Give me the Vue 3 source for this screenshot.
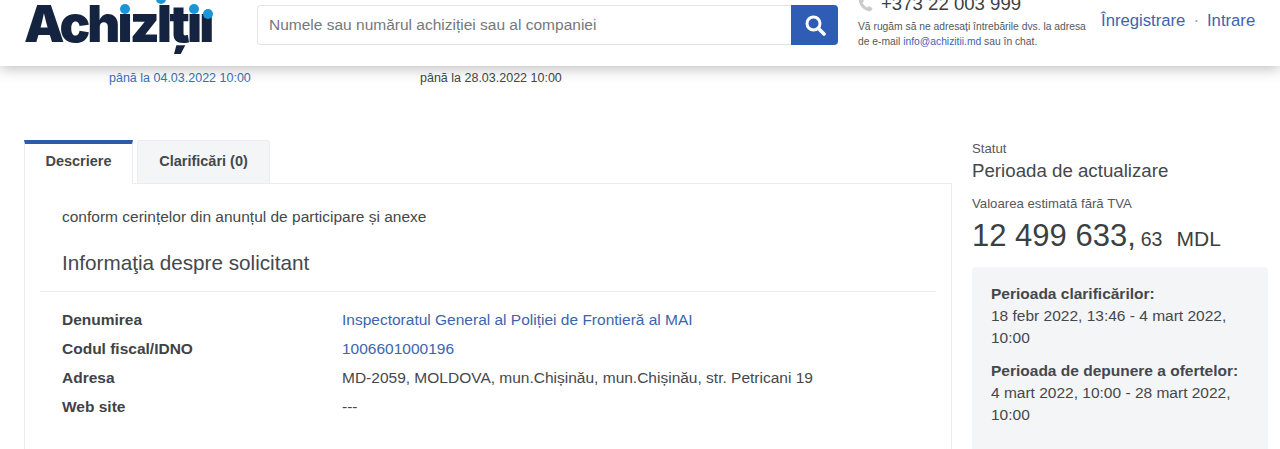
<template>
  <div class="page">
    <header class="topbar">
      <div class="logo">
        <span class="logo-text">AchızIțıı</span>
        <i class="dot dot-1"></i>
        <i class="dot dot-2"></i>
        <i class="dot dot-3"></i>
        <i class="dot dot-4"></i>
      </div>
      <form class="search" @submit.prevent>
        <input class="search-input" type="text" placeholder="Numele sau numărul achiziției sau al companiei" />
        <button class="search-btn" aria-label="Caută">
          <svg width="22" height="22" viewBox="0 0 22 22" fill="none">
            <circle cx="9.5" cy="9.5" r="6.5" stroke="#fff" stroke-width="3" />
            <path d="M14.5 14.5L20 20" stroke="#fff" stroke-width="3.6" stroke-linecap="round" />
          </svg>
        </button>
      </form>
      <div class="contact">
        <div class="phone">
          <svg width="15" height="15" viewBox="0 0 16 16">
            <path d="M4 0.5L1.8 1.6C0.8 2.2 0.6 3.4 1 5C2.2 9.8 6.2 13.8 11 15C12.6 15.4 13.8 15.2 14.4 14.2L15.5 12L11.6 9.6L9.8 11.2C8 10.4 5.6 8 4.8 6.2L6.4 4.4Z" fill="#c9cccf" />
          </svg>
          <span>+373 22 003 999</span>
        </div>
        <p class="contact-note">
          Vă rugăm să ne adresați întrebările dvs. la adresa<br />
          de e-mail <a href="#">info@achizitii.md</a> sau în chat.
        </p>
      </div>
      <nav class="auth">
        <a href="#">Înregistrare</a>
        <span class="sep">·</span>
        <a href="#">Intrare</a>
      </nav>
    </header>

    <div class="deadlines">
      <span class="deadline-a">până la 04.03.2022 10:00</span>
      <span class="deadline-b">până la 28.03.2022 10:00</span>
    </div>

    <main class="content">
      <section class="left">
        <div class="tabs">
          <div class="tab active">Descriere</div>
          <div class="tab">Clarificări (0)</div>
        </div>
        <div class="panel">
          <p class="lead">conform cerințelor din anunțul de participare și anexe</p>
          <h2 class="title">Informaţia despre solicitant</h2>
          <dl class="info">
            <template v-for="row in rows" :key="row.label">
              <dt>{{ row.label }}</dt>
              <dd :class="{ link: row.link }">{{ row.value }}</dd>
            </template>
          </dl>
        </div>
      </section>

      <aside class="side">
        <div class="side-label">Statut</div>
        <div class="status">Perioada de actualizare</div>
        <div class="side-label value-label">Valoarea estimată fără TVA</div>
        <div class="amount">
          <span class="amount-main">12 499 633,</span>
          <span class="amount-cents">63</span>
          <span class="amount-cur">MDL</span>
        </div>
        <div class="periods">
          <div v-for="p in periods" :key="p.title" class="period">
            <strong>{{ p.title }}</strong>
            <div>{{ p.text }}</div>
          </div>
        </div>
      </aside>
    </main>
  </div>
</template>

<script setup>
const rows = [
  { label: 'Denumirea', value: 'Inspectoratul General al Poliției de Frontieră al MAI', link: true },
  { label: 'Codul fiscal/IDNO', value: '1006601000196', link: true },
  { label: 'Adresa', value: 'MD-2059, MOLDOVA, mun.Chișinău, mun.Chișinău, str. Petricani 19' },
  { label: 'Web site', value: '---' }
];

const periods = [
  { title: 'Perioada clarificărilor:', text: '18 febr 2022, 13:46 - 4 mart 2022, 10:00' },
  { title: 'Perioada de depunere a ofertelor:', text: '4 mart 2022, 10:00 - 28 mart 2022, 10:00' }
];
</script>

<style>
html, body {
  background: #fff;
  overflow: hidden;
}
</style>

<style scoped>
.page {
  height: 449px;
  overflow: hidden;
  font-family: "Liberation Sans", Arial, sans-serif;
  color: #3f4347;
  background: #fff;
}
.topbar {
  position: relative;
  display: flex;
  align-items: flex-start;
  height: 66px;
  background: #fff;
  box-shadow: 0 2px 14px rgba(0, 0, 0, 0.28);
}
.logo {
  position: relative;
  width: 257px;
  height: 66px;
  flex-shrink: 0;
}
.logo-text {
  position: absolute;
  left: 24px;
  top: -5px;
  font-family: Inter, "Liberation Sans", sans-serif;
  font-weight: 900;
  font-size: 51px;
  line-height: 58px;
  letter-spacing: -2.9px;
  color: #14233f;
  white-space: nowrap;
}
.dot {
  position: absolute;
  width: 10px;
  height: 10px;
  border-radius: 50%;
  background: #1a96d8;
}
.dot-1 { left: 120px; top: 4px; }
.dot-2 { left: 156px; top: -6px; }
.dot-3 { left: 189px; top: 4px; }
.dot-4 { left: 203px; top: 9px; }
.search {
  display: flex;
  width: 581px;
  height: 40px;
  margin-top: 5px;
  flex-shrink: 0;
}
.search-input {
  flex: 1;
  min-width: 0;
  box-sizing: border-box;
  height: 40px;
  padding: 0 11px;
  border: 1px solid #e3e4e6;
  border-right: 0;
  border-radius: 4px 0 0 4px;
  font: 15.5px "Liberation Sans", Arial, sans-serif;
  color: #555;
  outline: none;
}
.search-input::placeholder {
  color: #74787c;
  opacity: 1;
}
.search-btn {
  display: flex;
  align-items: center;
  justify-content: center;
  width: 47px;
  height: 40px;
  padding: 0;
  border: 0;
  border-radius: 0 4px 4px 0;
  background: #2f5db5;
}
.contact {
  width: 243px;
  margin-left: 20px;
  flex-shrink: 0;
}
.phone {
  display: flex;
  align-items: center;
  gap: 8px;
  height: 18px;
  margin-top: -5px;
  font-size: 18.6px;
  line-height: 18px;
  color: #3c3f42;
}
.contact-note {
  margin: 6px 0 0;
  font-size: 10.3px;
  line-height: 15px;
  color: #55585c;
  white-space: nowrap;
}
.contact-note a {
  color: #3c63b4;
  text-decoration: none;
}
.auth {
  display: flex;
  align-items: center;
  height: 18px;
  margin-top: 12px;
  font-size: 16.7px;
  white-space: nowrap;
}
.auth a {
  color: #3d64ad;
  text-decoration: none;
}
.sep {
  margin: 0 8px;
  color: #8a97b0;
}
.deadlines {
  display: flex;
  height: 24px;
  padding: 4px 0 0 109px;
  font-size: 12.5px;
  line-height: 16px;
}
.deadline-a {
  width: 311px;
  color: #3b71b6;
}
.deadline-b {
  color: #43464a;
}
.content {
  display: flex;
  padding: 46px 12px 0 24px;
}
.left {
  width: 928px;
  flex-shrink: 0;
}
.tabs {
  display: flex;
  gap: 4px;
  height: 43px;
  position: relative;
  z-index: 1;
}
.tab {
  box-sizing: border-box;
  width: 133px;
  height: 43px;
  border: 1px solid #ececee;
  border-bottom: 0;
  border-radius: 3px 3px 0 0;
  background: #f4f5f7;
  font-size: 14.5px;
  font-weight: 700;
  line-height: 40px;
  text-align: center;
  color: #44484c;
}
.tab.active {
  width: 109px;
  height: 44px;
  border-top: 4px solid #2f5aa8;
  border-radius: 0;
  background: #fff;
  line-height: 34px;
}
.panel {
  box-sizing: border-box;
  height: 300px;
  padding: 23px 15px 0;
  border: 1px solid #ececee;
}
.lead {
  margin: 0 0 0 22px;
  font-size: 15.5px;
  line-height: 20px;
  color: #44484c;
}
.title {
  margin: 22px 0 0;
  padding: 0 0 14px 22px;
  border-bottom: 1px solid #ececee;
  font-size: 20.7px;
  font-weight: 400;
  line-height: 28px;
  color: #44484c;
}
.info {
  display: grid;
  grid-template-columns: 280px 1fr;
  grid-auto-rows: 29px;
  margin: 13px 0 0 22px;
  font-size: 15.5px;
  line-height: 29px;
}
.info dt {
  font-weight: 700;
  color: #3f4347;
}
.info dd {
  margin: 0;
  color: #44484c;
}
.info dd.link {
  color: #3d64ad;
}
.side {
  width: 296px;
  margin-left: 20px;
  padding-top: 1px;
  flex-shrink: 0;
}
.side-label {
  font-size: 13.2px;
  line-height: 16px;
  color: #55585c;
}
.status {
  margin-top: 2px;
  font-size: 18.7px;
  line-height: 24px;
  color: #44484c;
}
.value-label {
  margin-top: 13px;
}
.amount {
  display: flex;
  align-items: baseline;
  margin-top: 5px;
  line-height: 38px;
  color: #3c3f42;
  white-space: nowrap;
}
.amount-main {
  font-size: 31px;
}
.amount-cents {
  margin-left: 5px;
  font-size: 19.5px;
}
.amount-cur {
  margin-left: 14px;
  font-size: 21px;
}
.periods {
  box-sizing: border-box;
  height: 200px;
  margin-top: 9px;
  padding: 16px 19px;
  border-radius: 4px;
  background: #f4f5f7;
  font-size: 15.5px;
  line-height: 22px;
  color: #44484c;
}
.period + .period {
  margin-top: 11px;
}
</style>
